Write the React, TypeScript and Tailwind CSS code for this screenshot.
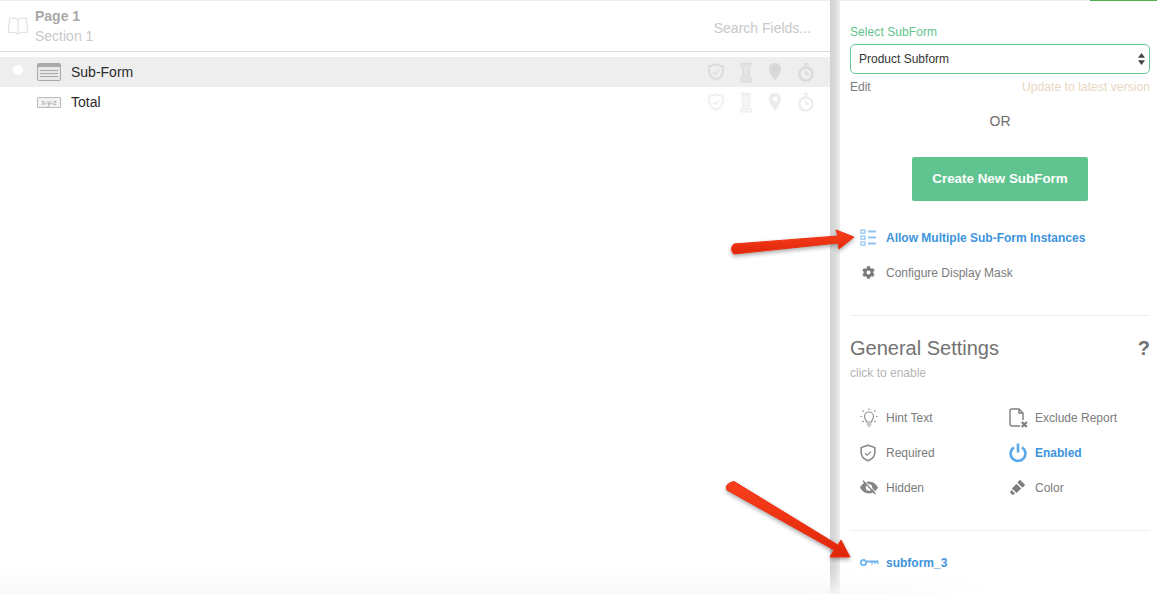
import React from 'react'
import { FaCog } from 'react-icons/fa'

const Shield = ({ className = '' }: { className?: string }) => (
  <svg viewBox="0 0 16 18" className={className} fill="none" stroke="currentColor" strokeWidth="1.6">
    <path d="M8 1.200 14.800 3.600v5c0 4-3 6.800-6.800 8.200C4.200 15.400 1.200 12.600 1.200 8.600v-5z" />
    <path d="M5 9.200l2.200 1.900L11 7.600" strokeWidth="1.200" />
  </svg>
)

const Rook = () => (
  <svg viewBox="0 0 14 21" className="w-[16px] h-[21px]" fill="currentColor" fillOpacity="0.45" stroke="currentColor">
    <path d="M2.500 1h2.200v2h1.300V1h2v2h1.300V1h2.200v4L10 6.800l.7 8H3.300l.7-8L2.500 5z" />
    <path d="M1.500 16.500h11v3.500h-11z" />
  </svg>
)

const Pin = ({ hole }: { hole: string }) => (
  <svg viewBox="0 0 12 18" className="w-[12px] h-[18px]" fill="currentColor">
    <path d="M6 0c3.300 0 6 2.500 6 5.800C12 9.500 8.500 14.500 6 18 3.500 14.500 0 9.500 0 5.800 0 2.500 2.700 0 6 0z" />
    <circle cx="6" cy="5.900" r="2.300" fill={hole} />
  </svg>
)

const Stopwatch = () => (
  <svg viewBox="0 0 16 19" className="w-[16px] h-[19px]" fill="none" stroke="currentColor" strokeWidth="2.200">
    <circle cx="8" cy="11" r="6.600" />
    <path d="M5.500 1h5M8 1v3M8 7.500V11h3" strokeWidth="1.600" />
  </svg>
)

const FieldFlags = ({ dark }: { dark?: boolean }) => (
  <div className={`flex items-center mr-[9px] [&>span]:flex [&>span]:justify-center ${dark ? 'text-[#d9d9d9]' : 'text-[#ececec]'}`}>
    <span className="w-[30px]"><Shield className="w-[16px] h-[18px]" /></span>
    <span className="w-[30px]"><Rook /></span>
    <span className="w-[30px] -ml-px"><Pin hole={dark ? '#d2d2d2' : '#ffffff'} /></span>
    <span className="w-[31px]"><Stopwatch /></span>
  </div>
)

const ListIcon = () => (
  <svg viewBox="0 0 16 17" className="w-[16px] h-[17px] text-[#8dc3f1]" fill="none" stroke="currentColor" strokeWidth="1.200">
    <rect x="1" y="1" width="4" height="3.200" />
    <rect x="1" y="7" width="4" height="3.200" />
    <rect x="1" y="13" width="4" height="3.200" />
    <path d="M8 2.500h8M8 8.500h8M8 14.500h8" strokeWidth="1.800" />
  </svg>
)

const Bulb = () => (
  <svg viewBox="0 0 18 20" className="w-[18px] h-[20px] text-[#8f8f8f]" fill="none" stroke="currentColor" strokeWidth="1.200">
    <path d="M6.500 14c0-2-2-3-2-5.500a4.500 4.500 0 0 1 9 0c0 2.500-2 3.500-2 5.500zM6.500 16h5M7.500 18h3" />
    <path d="M9 .5v1.500M2.500 2.500l1.200 1.200M15.500 2.500l-1.200 1.200M.5 8.500H2M16 8.500h1.500M2.500 14l1.200-1.200M15.500 14l-1.200-1.200" />
  </svg>
)

const FileX = () => (
  <svg viewBox="0 0 19 20" className="w-[19px] h-[20px] text-[#7d7d7d]" fill="none" stroke="currentColor" strokeWidth="1.400">
    <path d="M11 18H3a2 2 0 0 1-2-2V3a2 2 0 0 1 2-2h7l4 4v7" />
    <path d="M10 1v4h4" />
    <path d="M12.800 14l5 5M17.800 14l-5 5" strokeWidth="2.200" />
  </svg>
)

const Power = () => (
  <svg viewBox="0 0 18 19" className="w-[18px] h-[19px] text-[#5aa8ec]" fill="none" stroke="currentColor" strokeWidth="2.600">
    <path d="M5 4.300a7.400 7.400 0 1 0 8 0" />
    <path d="M9 .5v9" />
  </svg>
)

const EyeOff = () => (
  <svg viewBox="0 0 18 15" className="w-[18px] h-[15px] text-[#858585]">
    <path fill="currentColor" fillRule="evenodd" d="M9 1.500c4.200 0 7.300 2.900 9 6-1.700 3.100-4.800 6-9 6s-7.300-2.900-9-6c1.700-3.100 4.800-6 9-6zm0 2.800a3.200 3.200 0 1 0 0 6.400 3.200 3.200 0 0 0 0-6.400z" />
    <path d="M3 .8 15.500 14" stroke="#858585" strokeWidth="1.500" />
    <path d="M4.300 .3 16.800 13.500" stroke="#fff" strokeWidth="1" />
  </svg>
)

const Dropper = () => (
  <svg viewBox="0 0 17 17" className="w-[17px] h-[17px] text-[#7d7d7d]" fill="currentColor">
    <path d="M11 .8 16.200 6 13.500 8.700 8.300 3.500z" />
    <path d="M7.500 4.800l4.700 4.700-4.600 4.600-4.700-4.700z" />
    <path d="M2.300 10.800l3.900 3.900-2.600 1.300-2.600-2.600z" />
  </svg>
)

const Key = () => (
  <svg viewBox="0 0 19 9" className="w-[19px] h-[9px] text-[#6ab2ef]" fill="none" stroke="currentColor">
    <circle cx="3.500" cy="4.500" r="2.700" strokeWidth="1.700" />
    <path d="M6.500 3.500H18.500" strokeWidth="2" />
    <path d="M12 4v2.500M15 4v2M17.800 4v2" strokeWidth="1.200" />
  </svg>
)

const Row = ({ icon, label, blue }: { icon: React.ReactNode; label: string; blue?: boolean }) => (
  <div className="flex items-center h-[35px]">
    <div className="w-[36px] pl-[10px] flex items-center shrink-0">{icon}</div>
    <span className={`text-[12px] ${blue ? 'font-bold text-[#3d94dc]' : 'text-[#7b7b7b]'}`}>{label}</span>
  </div>
)

export default function App() {
  return (
    <div className="relative flex w-[1157px] h-[594px] overflow-hidden bg-white font-['Liberation_Sans',Arial,sans-serif]">
      {/* fields list */}
      <div className="w-[830px] shrink-0 border-t border-[#eeeeee]">
        <div className="flex justify-between h-[51px] border-b border-[#dddddd]">
          <div className="flex items-center pl-[8px] gap-[7px]">
            <svg viewBox="0 0 20 18" className="w-[20px] h-[18px] text-[#dddddd]" fill="none" stroke="currentColor">
              <path d="M10 2.500C8 1 4.500.8 1.500 1.200L.5 15.500c3.500-.4 7-.3 9.500 1.500 2.500-1.800 6-1.900 9.500-1.500l-1-14.300C15.500.8 12 1 10 2.500zM10 2.500V17" />
            </svg>
            <div className="flex flex-col text-[14px] leading-[20px]">
              <span className="font-bold text-[#a9a9a9]">Page 1</span>
              <span className="text-[#c9c9c9]">Section 1</span>
            </div>
          </div>
          <span className="text-[14px] text-[#c8c8c8] mr-[19px] mt-[17px] leading-[20px]">Search Fields...</span>
        </div>
        <div className="mt-[5px] flex items-center h-[30px] bg-[#eeeeee]">
          <span className="w-[10px] h-[10px] rounded-full bg-white ml-[13px] -mt-[4px]" />
          <div className="ml-[14px] w-[24px] h-[18px] border border-[#aaaaaa] rounded-[2px] bg-[#e8e8e8] border-t-[4px] flex flex-col justify-center gap-[2px] px-[2px]">
            <div className="h-px bg-[#aaaaaa]" />
            <div className="h-px bg-[#aaaaaa]" />
            <div className="h-px bg-[#aaaaaa]" />
          </div>
          <span className="ml-[10px] text-[14px] text-[#2b2b2b]">Sub-Form</span>
          <div className="flex-1" />
          <FieldFlags dark />
        </div>
        <div className="flex items-center h-[30px]">
          <div className="ml-[37px] w-[24px] h-[11px] border border-[#bbbbbb] rounded-[1px] bg-[#f2f2f2] text-[7px] leading-[9px] text-center text-[#999999] overflow-hidden">
            x-y-z
          </div>
          <span className="ml-[10px] text-[14px] text-[#2b2b2b]">Total</span>
          <div className="flex-1" />
          <FieldFlags />
        </div>
      </div>

      {/* gutter */}
      <div className="w-[10px] shrink-0 bg-gradient-to-r from-[#d2d2d2] via-[#dadada] to-[#eeeeee]" />

      {/* settings */}
      <div className="flex-1 pl-[10px] pr-[7px]">
        <div className="h-px -ml-[10px] -mr-[7px] bg-[#eeeeee] flex justify-end">
          <div className="w-[67px] h-px bg-[#4caf50]" />
        </div>
        <div className="mt-[24px] text-[12px] tracking-[0.08px] leading-[14px] text-[#5fc48c]">Select SubForm</div>
        <div className="mt-[5px] flex items-center justify-between h-[30px] border border-[#66c795] rounded-[5px] pl-[8px] pr-[4px]">
          <span className="text-[12px] text-[#333333]">Product Subform</span>
          <svg viewBox="0 0 7 12" className="w-[7px] h-[12px] text-[#444444]" fill="currentColor">
            <path d="M3.500 0 7 4.800H0zM0 7.200h7L3.500 12z" />
          </svg>
        </div>
        <div className="mt-[6px] flex justify-between text-[12px] leading-[14px]">
          <span className="text-[#7b7b7b]">Edit</span>
          <span className="text-[#e6d8c0] tracking-[0.08px]">Update to latest version</span>
        </div>
        <div className="mt-[19px] text-center text-[14px] leading-[16px] text-[#6f6f6f]">OR</div>
        <div className="mt-[28px] flex justify-center">
          <button className="w-[176px] h-[44px] rounded-[2px] bg-[#60c490] text-white text-[13.4px] font-bold">Create New SubForm</button>
        </div>
        <div className="mt-[19px]">
          <Row icon={<ListIcon />} label="Allow Multiple Sub-Form Instances" blue />
          <Row icon={<FaCog size={13} className="text-[#7b7b7b] ml-[2px]" />} label="Configure Display Mask" />
        </div>
        <div className="mt-[25px] border-t border-[#eeeeee] pt-[20px] flex justify-between items-center">
          <span className="text-[20px] leading-[24px] text-[#727272]">General Settings</span>
          <span className="text-[20px] leading-[24px] font-bold text-[#727272]">?</span>
        </div>
        <div className="mt-[6px] text-[12px] leading-[14px] text-[#b5b5b5]">click to enable</div>
        <div className="mt-[20px] grid grid-cols-[149px_1fr]">
          <Row icon={<Bulb />} label="Hint Text" />
          <Row icon={<FileX />} label="Exclude Report" />
          <Row icon={<Shield className="w-[16px] h-[18px] text-[#8b8b8b]" />} label="Required" />
          <Row icon={<Power />} label="Enabled" blue />
          <Row icon={<EyeOff />} label="Hidden" />
          <Row icon={<Dropper />} label="Color" />
        </div>
        <div className="mt-[25px] border-t border-[#eeeeee] pt-[14px]">
          <Row icon={<Key />} label="subform_3" blue />
        </div>
      </div>

      {/* fade along the bottom edge */}
      <div className="absolute left-0 bottom-0 w-[1000px] h-[24px] bg-gradient-to-t from-[#f8f8f8] to-transparent pointer-events-none [mask-image:linear-gradient(to_right,black_80%,transparent)]" />

      {/* annotation arrows */}
      <svg viewBox="0 0 1157 594" className="absolute inset-0 w-[1157px] h-[594px] pointer-events-none drop-shadow-[0_2px_2px_rgba(0,0,0,0.35)]">
        <defs>
          <linearGradient id="arrowRed" x1="0" y1="0" x2="0" y2="1">
            <stop offset="0" stopColor="#f9401c" />
            <stop offset="1" stopColor="#e0260a" />
          </linearGradient>
        </defs>
        <path
          d="M734 244 L838 236 L836 230 L854 237 L839 249 L838 243 L734 254 Q729 249 734 244 Z"
          fill="url(#arrowRed)"
          stroke="#ee3010"
          strokeLinejoin="round"
        />
        <path
          d="M734 481.500 L838 545 L841 540 L850 557 L830 557 L834 550 L727 490 Q724 484 734 481.500 Z"
          fill="url(#arrowRed)"
          stroke="#ee3010"
          strokeLinejoin="round"
        />
      </svg>
    </div>
  )
}
